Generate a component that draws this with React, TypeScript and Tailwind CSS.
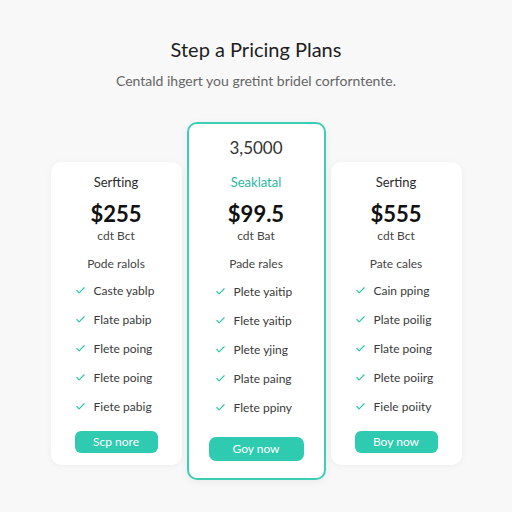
import { Check } from "lucide-react";

type Plan = {
  name: string;
  price: string;
  per: string;
  heading: string;
  features: string[];
  cta: string;
};

const left: Plan = {
  name: "Serfting",
  price: "$255",
  per: "cdt Bct",
  heading: "Pode ralols",
  features: ["Caste yablp", "Flate pabip", "Flete poing", "Flete poing", "Fiete pabig"],
  cta: "Scp nore",
};

const middle: Plan = {
  name: "Seaklatal",
  price: "$99.5",
  per: "cdt Bat",
  heading: "Pade rales",
  features: ["Plete yaitip", "Flete yaitip", "Plete yjing", "Plate paing", "Flete ppiny"],
  cta: "Goy now",
};

const right: Plan = {
  name: "Serting",
  price: "$555",
  per: "cdt Bct",
  heading: "Pate cales",
  features: ["Cain pping", "Plate poilig", "Flate poing", "Plete poiirg", "Fiele poiity"],
  cta: "Boy now",
};

function Features({ items, className }: { items: string[]; className: string }) {
  return (
    <ul className={className}>
      {items.map((f, i) => (
        <li key={i} className="h-[29px] flex items-center gap-[8px]">
          <Check size={11} strokeWidth={2.5} className="text-[#2ec4a9] shrink-0" />
          <span className="text-[12px] leading-[16px] text-[#3a3a3a]">{f}</span>
        </li>
      ))}
    </ul>
  );
}

function SideCard({ plan }: { plan: Plan }) {
  return (
    <div className="mt-[40px] w-[131px] h-[303px] bg-white rounded-[10px] shadow-[0_1px_6px_rgba(0,0,0,0.05)] flex flex-col pt-[11px]">
      <div className="text-center text-[13px] leading-[18px] text-[#2a2a2a]">{plan.name}</div>
      <div className="mt-[10px] text-center text-[22px] leading-[26px] font-bold text-[#111]">{plan.price}</div>
      <div className="mt-[1px] text-center text-[12px] leading-[16px] text-[#444]">{plan.per}</div>
      <div className="mt-[12px] text-center text-[12px] leading-[16px] text-[#444]">{plan.heading}</div>
      <Features items={plan.features} className="mt-[4px] pl-[24px]" />
      <div className="mt-[10px] flex justify-center">
        <button className="w-[83px] h-[22px] rounded-[6px] bg-[#2fcbb0] text-white text-[12px]">{plan.cta}</button>
      </div>
    </div>
  );
}

export default function App() {
  return (
    <div className="w-[512px] h-[512px] bg-[#f8f8f8] flex flex-col items-center" style={{ fontFamily: "Lato, 'Open Sans', sans-serif" }}>
      <h1 className="mt-[37px] text-[20px] leading-[24px] text-[#1e1e1e]">Step a Pricing Plans</h1>
      <p className="mt-[11px] text-[14px] leading-[18px] text-[#666]">Centald ihgert you gretint bridel corforntente.</p>

      <div className="mt-[32px] flex items-start gap-[5px]">
        <SideCard plan={left} />

        <div className="w-[139px] h-[358px] bg-white rounded-[10px] border-2 border-[#3ccdb5] shadow-[0_2px_8px_rgba(0,0,0,0.06)] flex flex-col pt-[13px]">
          <div className="text-center text-[17px] leading-[22px] text-[#333]">3,5000</div>
          <div className="mt-[14px] text-center text-[13px] leading-[18px] text-[#2bb8a2]">{middle.name}</div>
          <div className="mt-[10px] text-center text-[22px] leading-[26px] font-bold text-[#111]">{middle.price}</div>
          <div className="mt-[1px] text-center text-[12px] leading-[16px] text-[#444]">{middle.per}</div>
          <div className="mt-[12px] text-center text-[12px] leading-[16px] text-[#444]">{middle.heading}</div>
          <Features items={middle.features} className="mt-[5px] pl-[26px]" />
          <div className="mt-[15px] flex justify-center">
            <button className="w-[95px] h-[24px] rounded-[7px] bg-[#2fcbb0] text-white text-[12px]">{middle.cta}</button>
          </div>
        </div>

        <SideCard plan={right} />
      </div>
    </div>
  );
}
